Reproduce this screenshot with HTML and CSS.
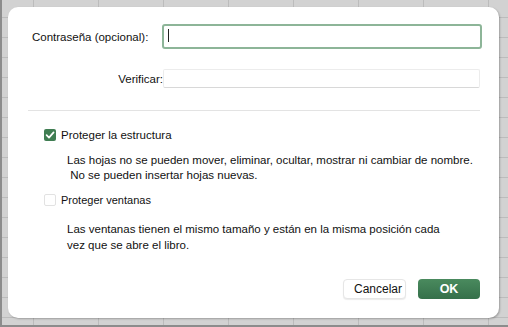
FILE: index.html
```html
<!DOCTYPE html>
<html lang="es">
<head>
<meta charset="utf-8">
<title>Proteger libro</title>
<link rel="stylesheet" href="styles.css">
</head>
<body>
<div class="screen">
  <div class="dialog">
    <div class="field field-pw">
      <label class="lbl">Contraseña (opcional):</label>
      <div class="input input-focus"><span class="caret"></span></div>
    </div>
    <div class="field field-verify">
      <label class="lbl lbl-right">Verificar:</label>
      <div class="input input-plain"></div>
    </div>
    <div class="sep"></div>
    <div class="check check-first">
      <span class="box box-on"><svg width="12" height="12" viewBox="0 0 12 12"><path d="M2.6 6.2 L5 8.6 L9.6 3.4" fill="none" stroke="#fff" stroke-width="1.7" stroke-linecap="round" stroke-linejoin="round"/></svg></span>
      <span class="check-text">Proteger la estructura</span>
    </div>
    <p class="desc desc-first">Las hojas no se pueden mover, eliminar, ocultar, mostrar ni cambiar de nombre.<br>&nbsp;No se pueden insertar hojas nuevas.</p>
    <div class="check check-second">
      <span class="box box-off"></span>
      <span class="check-text">Proteger ventanas</span>
    </div>
    <p class="desc desc-second">Las ventanas tienen el mismo tamaño y están en la misma posición cada<br>vez que se abre el libro.</p>
    <div class="buttons">
      <button class="btn btn-cancel">Cancelar</button>
      <button class="btn btn-ok">OK</button>
    </div>
  </div>
</div>
</body>
</html>
```
FILE: styles.css
```css
html, body {
  margin: 0;
  padding: 0;
}
body {
  width: 508px;
  height: 327px;
  overflow: hidden;
  font-family: "Liberation Sans", Arial, sans-serif;
  color: #111;
}
.screen {
  box-sizing: border-box;
  width: 508px;
  height: 327px;
  background-color: #d2d2d2;
  background-image:
    linear-gradient(to right, #bcbcbc 1px, transparent 1px),
    linear-gradient(to bottom, #bcbcbc 1px, transparent 1px);
  background-size: 65px 20px, 65px 20px;
  background-position: 31px 0, 0 17px;
  border-left: 2px solid #8c8c8c;
  border-bottom: 2px solid #8c8c8c;
  padding: 7px 0 0 6px;
}
.dialog {
  box-sizing: border-box;
  width: 491px;
  height: 311px;
  background: #fff;
  border-radius: 10px;
  box-shadow: 1px 1px 2px rgba(0,0,0,0.25);
  padding: 17px 0 0 0;
  display: flex;
  flex-direction: column;
}
.field {
  display: flex;
  align-items: center;
}
.lbl {
  font-size: 11.5px;
  color: #111;
}
.field-pw .lbl {
  padding-left: 24px;
  width: 130px;
}
.field-pw .input {
  width: 320px;
  height: 25px;
}
.input {
  box-sizing: border-box;
  background: #fff;
  position: relative;
}
.input-focus {
  border: 2.5px solid #8db598;
  border-radius: 3px;
}
.caret {
  position: absolute;
  left: 4px;
  top: 3px;
  width: 1px;
  height: 13px;
  background: #222;
}
.field-verify {
  margin-top: 20px;
}
.lbl-right {
  width: 155px;
  text-align: right;
}
.input-plain {
  width: 317px;
  height: 19px;
  border: 1px solid #ececec;
  border-bottom-color: #d8d8d8;
  border-radius: 2px;
}
.sep {
  margin: 22px 0 0 20px;
  width: 452px;
  height: 1px;
  background: #e3e3e3;
}
.check {
  display: flex;
  align-items: center;
  padding-left: 36px;
  font-size: 11.5px;
}
.check-first {
  margin-top: 18px;
}
.check-second {
  margin-top: 11px;
}
.box {
  box-sizing: border-box;
  width: 12px;
  height: 12px;
  border-radius: 2px;
  margin-right: 5px;
  display: flex;
}
.box-on {
  background: #3f7d52;
}
.box-off {
  border: 1px solid #e2e2e2;
}
.check-second .check-text {
  font-size: 11px;
}
.desc {
  margin: 0;
  padding-left: 59px;
  font-size: 11.5px;
  color: #111;
}
.desc-first {
  margin-top: 12px;
  line-height: 15px;
}
.desc-second {
  margin-top: 15px;
  line-height: 16px;
}
.buttons {
  display: flex;
  justify-content: flex-end;
  gap: 12px;
  padding-right: 19px;
  margin-top: 26px;
}
.btn {
  box-sizing: border-box;
  height: 20px;
  font-family: "Liberation Sans", Arial, sans-serif;
  border-radius: 4px;
  padding: 0;
}
.btn-cancel {
  width: 63px;
  background: #fff;
  border: 1px solid #e6e6e6;
  box-shadow: 0 1px 1px rgba(0,0,0,0.08);
  font-size: 12px;
  color: #111;
  text-align: right;
  padding-right: 3px;
}
.btn-ok {
  width: 62px;
  border: none;
  background: linear-gradient(#4a8a5e, #35704a);
  color: #fff;
  font-weight: bold;
  font-size: 12.5px;
}
```
